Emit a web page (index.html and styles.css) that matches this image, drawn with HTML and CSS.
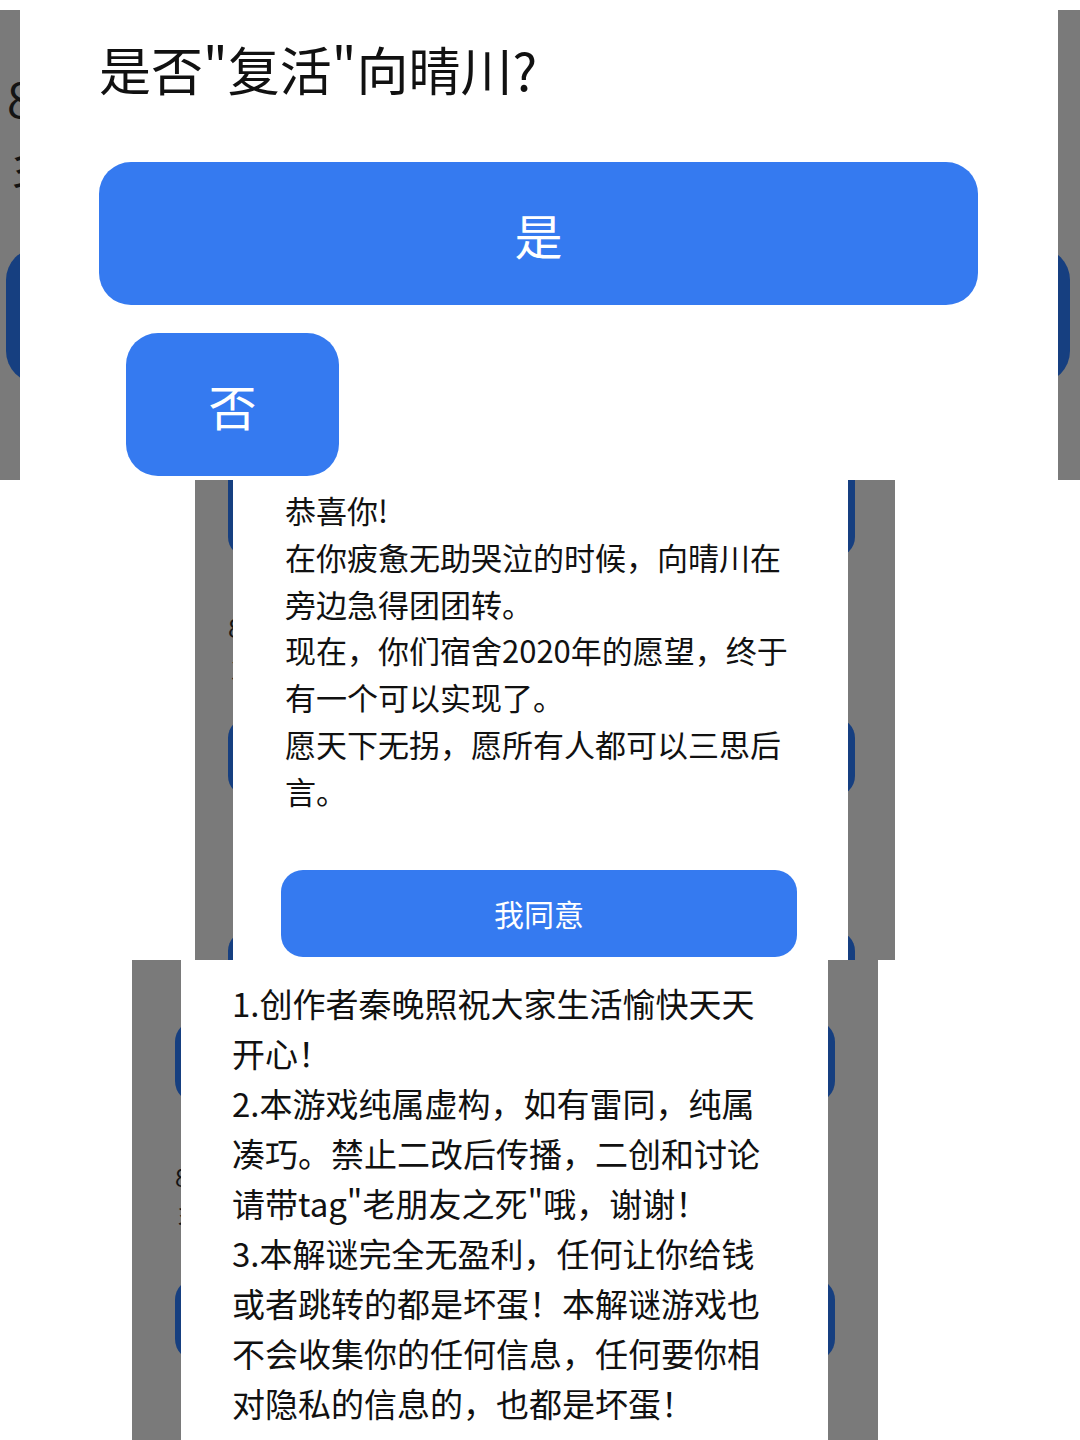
FILE: index.html
```html
<!DOCTYPE html>
<html lang="zh-CN">
<head>
    <meta charset="UTF-8">
    <meta name="viewport" content="width=device-width, initial-scale=1.0">
    <title>老朋友之死</title>
    <link rel="stylesheet" href="styles.css">
</head>
<body>
    <div class="collage">
        <!-- shot 1: revive question -->
        <section class="shot shot-revive">
            <div class="backdrop">
                <div class="ghost-num">8</div>
                <div class="ghost-line">彡</div>
                <div class="ghost-btn"></div>
            </div>
            <div class="dialog dialog-revive">
                <h1 class="dialog-title">是否"复活"向晴川?</h1>
                <button type="button" class="btn btn-yes">是</button>
                <button type="button" class="btn btn-no">否</button>
            </div>
        </section>

        <!-- shot 2: congratulation -->
        <section class="shot shot-congrats">
            <div class="backdrop">
                <div class="ghost-btn ghost-btn-first"></div>
                <div class="ghost-num">8</div>
                <div class="ghost-line">彡</div>
                <div class="ghost-btn ghost-btn-second"></div>
                <div class="ghost-btn ghost-btn-third"></div>
            </div>
            <div class="dialog dialog-congrats">
                <div class="message">
                    <p>恭喜你!</p>
                    <p>在你疲惫无助哭泣的时候，向晴川在旁边急得团团转。</p>
                    <p>现在，你们宿舍2020年的愿望，终于有一个可以实现了。</p>
                    <p>愿天下无拐，愿所有人都可以三思后言。</p>
                </div>
                <button type="button" class="btn btn-agree">我同意</button>
            </div>
        </section>

        <!-- shot 3: notice -->
        <section class="shot shot-notice">
            <div class="backdrop">
                <div class="ghost-btn ghost-btn-first"></div>
                <div class="ghost-num">8</div>
                <div class="ghost-line">彡</div>
                <div class="ghost-btn ghost-btn-second"></div>
            </div>
            <div class="dialog dialog-notice">
                <div class="message">
                    <p>1.创作者秦晚照祝大家生活愉快天天开心！</p>
                    <p>2.本游戏纯属虚构，如有雷同，纯属凑巧。禁止二改后传播，二创和讨论请带tag"老朋友之死"哦，谢谢！</p>
                    <p>3.本解谜完全无盈利，任何让你给钱或者跳转的都是坏蛋！本解谜游戏也不会收集你的任何信息，任何要你相对隐私的信息的，也都是坏蛋！</p>
                </div>
            </div>
        </section>
    </div>
</body>
</html>
```

FILE: styles.css
```css
* {
    box-sizing: border-box;
}
body {
    margin: 0;
    background-color: #fff;
    color: #111;
    font-family: "Noto Sans CJK SC", "Noto Sans", sans-serif;
}
.collage {
    width: 1080px;
}
.shot {
    position: relative;
    height: 480px;
    overflow: hidden;
}
p {
    margin: 0;
}

/* dimmed page behind each dialog */
.backdrop {
    height: 100%;
    background-color: #7a7a7a;
    display: flex;
    flex-direction: column;
    align-items: flex-start;
}
.backdrop > div {
    flex-shrink: 0;
}
.ghost-num,
.ghost-line {
    color: #141414;
    line-height: normal;
}
.ghost-btn {
    background-color: #163f80;
}

.shot-revive .backdrop {
    margin-top: 10px;
    height: 470px;
    padding-left: 7px;
}
.shot-revive .ghost-num {
    font-size: 48px;
    margin-top: 52px;
}
.shot-revive .ghost-line {
    font-size: 44px;
    margin-top: 2px;
}
.shot-revive .ghost-btn {
    margin-top: 50px;
    margin-left: -1px;
    width: 1064px;
    height: 135px;
    border-radius: 32px;
}

.shot-congrats .backdrop {
    margin-left: 195px;
    width: 700px;
    padding-left: 33px;
}
.shot-congrats .ghost-btn {
    width: 627px;
    border-radius: 20px;
}
.shot-congrats .ghost-btn-first {
    margin-top: -20px;
    height: 97px;
}
.shot-congrats .ghost-num {
    font-size: 26px;
    margin-top: 51px;
}
.shot-congrats .ghost-line {
    font-size: 26px;
    margin-top: 3px;
}
.shot-congrats .ghost-btn-second {
    margin-top: 33px;
    height: 78px;
}
.shot-congrats .ghost-btn-third {
    margin-top: 135px;
    height: 80px;
}

.shot-notice .backdrop {
    margin-left: 132px;
    width: 746px;
    padding-left: 43px;
}
.shot-notice .ghost-btn {
    width: 660px;
    height: 83px;
    border-radius: 22px;
}
.shot-notice .ghost-btn-first {
    margin-top: 60px;
}
.shot-notice .ghost-num {
    font-size: 24px;
    margin-top: 56px;
}
.shot-notice .ghost-line {
    font-size: 24px;
    margin-top: 1px;
}
.shot-notice .ghost-btn-second {
    margin-top: 48px;
}

/* dialogs */
.dialog {
    position: absolute;
    top: 0;
    bottom: 0;
    background-color: #fff;
    display: flex;
    flex-direction: column;
    align-items: flex-start;
}
.btn {
    display: flex;
    align-items: center;
    justify-content: center;
    flex-shrink: 0;
    padding: 0;
    border: none;
    color: #fff;
    background-color: #357af0;
    font-family: inherit;
    cursor: pointer;
}

.dialog-revive {
    left: 20px;
    right: 22px;
    padding: 38px 80px 0 79px;
}
.dialog-title {
    margin: 0;
    font-size: 52px;
    line-height: 62px;
    font-weight: 400;
}
.btn-yes {
    margin-top: 62px;
    width: 100%;
    height: 143px;
    border-radius: 32px;
    font-size: 48px;
}
.btn-no {
    margin-top: 28px;
    margin-left: 27px;
    width: 213px;
    height: 143px;
    border-radius: 32px;
    font-size: 48px;
}

.dialog-congrats {
    left: 233px;
    width: 615px;
    padding: 7px 51px 0 48px;
}
.dialog-congrats .message {
    width: 514px;
    padding-left: 4px;
    font-size: 31px;
    line-height: 46.8px;
}
.btn-agree {
    margin-top: 55px;
    width: 516px;
    height: 87px;
    border-radius: 22px;
    font-size: 30px;
}

.dialog-notice {
    left: 181px;
    width: 647px;
    padding: 18px 51px 0;
}
.dialog-notice .message {
    width: 540px;
    font-size: 33px;
    line-height: 50px;
}
```
